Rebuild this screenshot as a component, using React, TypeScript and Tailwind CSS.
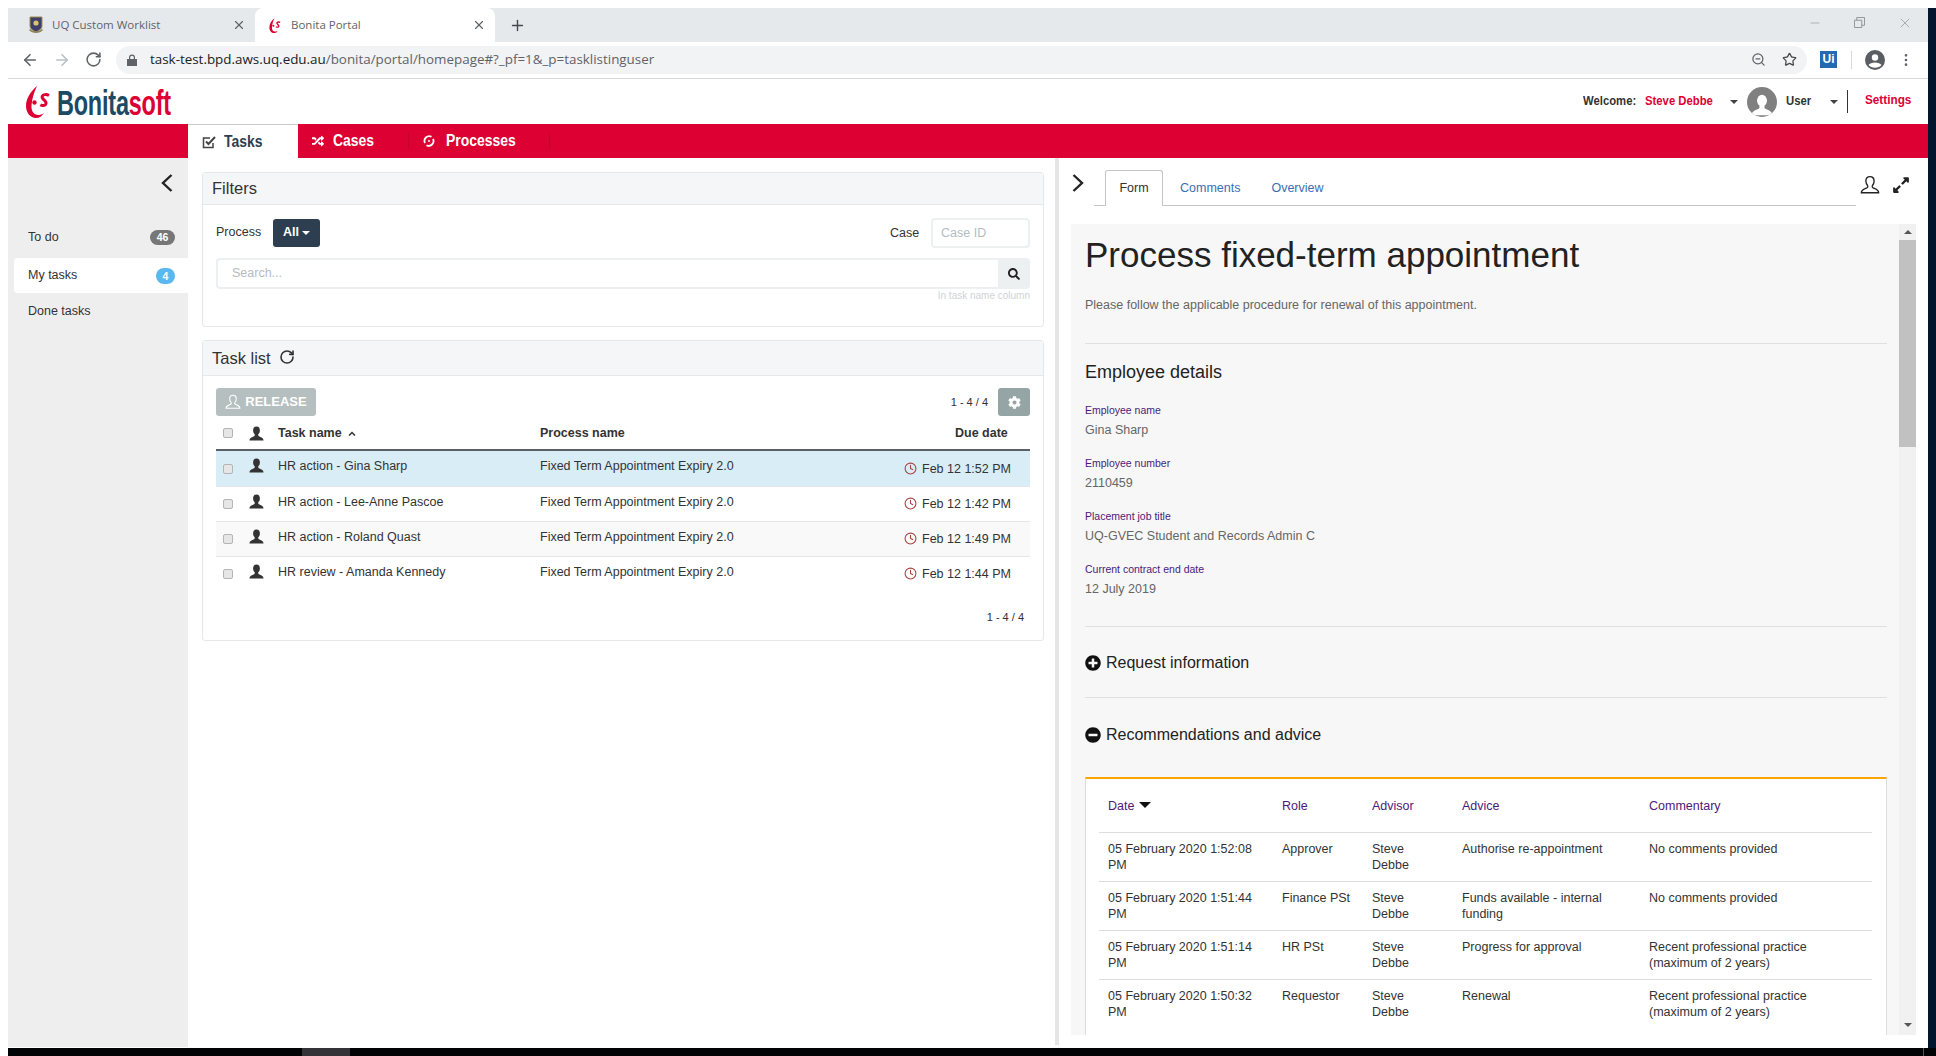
import React from "react";
import { FaCog, FaExpandAlt, FaMinusCircle, FaPlusCircle, FaRandom, FaSearch } from "react-icons/fa";
import { ArrowLeft, ArrowRight, Clock, Minus, MoreVertical, Plus, RotateCw, Star, X, ZoomOut } from "lucide-react";

const squeezed = "inline-block origin-left scale-x-[0.87] whitespace-nowrap";

function Bust({ className = "" }: { className?: string }) {
  return (
    <svg viewBox="0 0 16 16" className={className} fill="currentColor">
      <ellipse cx="8" cy="4.8" rx="3.6" ry="4.3" />
      <path d="M.5 15.5c0-3.2 3-3.6 5-4.7.8-.5.9-1.6.4-2.5h4.2c-.5.9-.4 2 .4 2.5 2 1.1 5 1.5 5 4.7z" />
    </svg>
  );
}

function BustOutline({ className = "" }: { className?: string }) {
  return (
    <svg viewBox="0 0 18 18" className={className} fill="none" stroke="currentColor" strokeWidth="1.2">
      <path d="M9 1.5c-2.4 0-3.7 1.9-3.7 4 0 1.8.8 3.2 1.5 4 .5.7.2 1.7-.6 2.1-1.9.9-5 1.6-5 4.4h15.6c0-2.8-3.1-3.5-5-4.4-.8-.4-1.1-1.4-.6-2.1.7-.8 1.500-2.200 1.500-4 0-2.100-1.300-4-3.700-4z" />
    </svg>
  );
}

function Swirl({ className = "" }: { className?: string }) {
  return (
    <svg viewBox="0 0 24 32" className={className} fill="none" stroke="#dd0033">
      <path d="M11 0C4 6 0 13 0 20c0 7 4.500 12 10 12 3.500 0 6-2 8-5-2 1.500-4 2-6 2-4 0-7-4-6.500-9.500C6 13 8 6 11 0z" fill="#dd0033" stroke="none" />
      <circle cx="8.500" cy="16.500" r="2.200" fill="#dd0033" stroke="none" />
      <path d="M23 9.500c-2.800-1.600-6-1-6.800.8-1.200 3 4.600 4.200 3.800 7.400-.5 2-3.600 2.400-5.600 1" strokeWidth="3" />
    </svg>
  );
}

function Crest() {
  return (
    <svg viewBox="0 0 14 18" className="w-[14px] h-[18px]">
      <path d="M1 1h12v9c0 3-3 4.500-6 6-3-1.500-6-3-6-6z" fill="#3f3f6b" stroke="#a08d4d" strokeWidth="1" />
      <circle cx="7" cy="7" r="2.600" fill="#d8c46c" />
      <path d="M0 14c3 4 11 4 14 0l-1-1c-3 3-9 3-12 0z" fill="#8b8455" />
    </svg>
  );
}

function Chevron({ dir }: { dir: "left" | "right" }) {
  return (
    <svg viewBox="0 0 12 18" className="w-[12px] h-[18px]" fill="none" stroke="#222" strokeWidth="2.400">
      <path d={dir === "left" ? "M10.500 1 2 9l8.500 8" : "M1.500 1 10 9l-8.500 8"} />
    </svg>
  );
}

function Caret({ className = "" }: { className?: string }) {
  return <span className={"inline-block w-0 h-0 border-x-[4px] border-x-transparent border-t-[4px] " + className} />;
}

function Checkbox() {
  return <span className="block w-[10px] h-[10px] rounded-[2px] bg-[#e6e6e6] border border-[#b5b5b5]" />;
}

const tasks = [
  { name: "HR action - Gina Sharp", due: "Feb 12 1:52 PM", bg: "bg-[#d9edf7]" },
  { name: "HR action - Lee-Anne Pascoe", due: "Feb 12 1:42 PM", bg: "bg-white" },
  { name: "HR action - Roland Quast", due: "Feb 12 1:49 PM", bg: "bg-[#f9f9f9]" },
  { name: "HR review - Amanda Kennedy", due: "Feb 12 1:44 PM", bg: "bg-white" },
];

const details = [
  ["Employee name", "Gina Sharp"],
  ["Employee number", "2110459"],
  ["Placement job title", "UQ-GVEC Student and Records Admin C"],
  ["Current contract end date", "12 July 2019"],
];

const advice = [
  ["05 February 2020 1:52:08 PM", "Approver", "Authorise re-appointment", "No comments provided"],
  ["05 February 2020 1:51:44 PM", "Finance PSt", "Funds available - internal funding", "No comments provided"],
  ["05 February 2020 1:51:14 PM", "HR PSt", "Progress for approval", "Recent professional practice (maximum of 2 years)"],
  ["05 February 2020 1:50:32 PM", "Requestor", "Renewal", "Recent professional practice (maximum of 2 years)"],
];

function BrowserChrome() {
  return (
    <>
      <div className="h-[34px] bg-[#e6e9ec] flex items-stretch font-['Open_Sans',sans-serif] text-[11.500px] text-[#5f6368] shrink-0">
        <div className="w-[247px] flex items-center pl-[21px] pr-[9px]">
          <Crest />
          <span className="ml-[9px] flex-1">UQ Custom Worklist</span>
          <X size={14} className="text-[#5f6368]" />
        </div>
        <div className="w-[240px] bg-white rounded-t-[8px] flex items-center pl-[14px] pr-[9px]">
          <Swirl className="w-[12px] h-[15px]" />
          <span className="ml-[10px] flex-1">Bonita Portal</span>
          <X size={14} className="text-[#5f6368]" />
        </div>
        <div className="w-[44px] flex items-center justify-center">
          <Plus size={17} className="text-[#45484c]" />
        </div>
        <div className="flex-1" />
        <div className="flex items-center gap-[32px] pr-[15px] -mt-[5px] text-[#8b8e91]">
          <Minus size={14} strokeWidth={1} />
          <svg viewBox="0 0 12 12" className="w-[11px] h-[11px]" fill="none" stroke="currentColor"><path d="M.5 3.500h8v8h-8zM3 3.500V.5h8.500V9H8.500" /></svg>
          <X size={16} strokeWidth={1} />
        </div>
      </div>
      <div className="h-[37px] bg-white border-b border-[#d9d9d9] flex items-center shrink-0 pb-[1px]">
        <div className="w-[108px] flex items-center pl-[13px] gap-[14px]">
          <ArrowLeft size={18} strokeWidth={2.200} className="text-[#5f6368]" />
          <ArrowRight size={18} strokeWidth={2.200} className="text-[#bcbfc3]" />
          <RotateCw size={17} strokeWidth={2.200} className="text-[#5f6368]" />
        </div>
        <div className="w-[1691px] h-[28px] rounded-full bg-[#f1f3f4] flex items-center pl-[11px] pr-[10px] font-['Open_Sans',sans-serif] text-[13.400px] text-[#5f6368]">
          <svg viewBox="0 0 10 12" className="w-[10px] h-[12px] mr-[13px] text-[#5f6368]" fill="currentColor"><path d="M0 5h10v7H0zM2 5V3.500a3 3 0 0 1 6 0V5H6.800V3.500a1.800 1.800 0 0 0-3.600 0V5z" /></svg>
          <span className="text-[#202124]">task-test.bpd.aws.uq.edu.au</span>
          <span>/bonita/portal/homepage#?_pf=1&amp;_p=tasklistinguser</span>
          <div className="flex-1" />
          <ZoomOut size={15} className="mr-[16px] text-[#5f6368]" />
          <Star size={15} className="text-[#45484c]" />
        </div>
        <div className="flex items-center ml-[13px]">
          <span className="w-[17px] h-[17px] bg-[#2569b1] text-white text-[12px] font-bold leading-[17px] text-center font-['Liberation_Sans',sans-serif]">Ui</span>
          <span className="w-px h-[18px] bg-[#d9d9d9] ml-[14px]" />
          <svg viewBox="0 0 20 20" className="w-[20px] h-[20px] ml-[13px]"><circle cx="10" cy="10" r="10" fill="#5a5d61" /><circle cx="10" cy="7.500" r="3.200" fill="#fff" /><path d="M3.500 15c2-3.500 11-3.500 13 0-3 3.600-10 3.600-13 0z" fill="#fff" /></svg>
          <MoreVertical size={16} className="ml-[13px] text-[#5f6368]" />
        </div>
      </div>
    </>
  );
}

function PortalHeader() {
  return (
    <>
      <div className="h-[45px] bg-white flex items-center shrink-0">
        <div className="flex items-end ml-[18px] h-[36px] w-[170px]">
          <Swirl className="w-[24px] h-[32px] mb-[2px] shrink-0" />
          <span className="inline-block origin-left scale-x-[0.67] whitespace-nowrap font-bold text-[35px] leading-[34px] text-[#1c4a64] ml-[7px] tracking-[-0.3px]">
            Bonita<span className="text-[#dd0033]">soft</span>
          </span>
        </div>
        <div className="flex-1" />
        <div className="flex items-center text-[13px] text-[#333] h-full">
          <span className="w-[62px] -mt-[2px]"><span className={squeezed + " font-bold"}>Welcome:</span></span>
          <span className="w-[85px] -mt-[2px]"><span className={squeezed + " font-bold text-[#dd0033]"}>Steve Debbe</span></span>
          <Caret className="border-t-[#444] mr-[9px]" />
          <span className="w-[30px] h-[30px] rounded-full bg-[#808080] overflow-hidden flex items-end justify-center">
            <Bust className="w-[22px] h-[24px] text-white" />
          </span>
          <span className="ml-[9px] w-[44px] -mt-[2px]"><span className={squeezed + " font-bold"}>User</span></span>
          <Caret className="border-t-[#444]" />
          <span className="w-px h-[23px] bg-[#333] ml-[9px]" />
          <span className="ml-[17px] mr-[17px] w-[46px] text-[13.500px] -mt-[2px]"><span className={squeezed + " font-bold text-[#dd0033]"}>Settings</span></span>
        </div>
      </div>
      <div className="h-[34px] bg-[#dd0033] flex items-stretch shrink-0 font-bold text-[16px]">
        <div className="w-[180px]" />
        <div className="w-[110px] bg-white text-[#2c3e50] flex items-center pl-[14px] border-t border-[#ccc]">
          <svg viewBox="0 0 14 14" className="w-[14px] h-[14px]" fill="none" stroke="#444" strokeWidth="1.500"><path d="M11 8v4.500H1.500V3H8" /><path d="M4 6.500l2.500 2.500L13 2" strokeWidth="2" /></svg>
          <span className={squeezed + " ml-[8px]"}>Tasks</span>
        </div>
        <div className="w-[111px] text-white flex items-center pl-[14px] relative">
          <FaRandom size={12} />
          <span className={squeezed + " ml-[9px]"}>Cases</span>
          <span className="absolute right-0 top-[9px] bottom-[9px] w-px bg-[#c4002d]" />
        </div>
        <div className="w-[141px] text-white flex items-center pl-[14px] relative">
          <svg viewBox="0 0 12 12" className="w-[12px] h-[12px]" fill="none" stroke="#fff" strokeWidth="1.800"><path d="M8.500 1.800A4.700 4.700 0 0 0 2 8M3.500 10.200A4.700 4.700 0 0 0 10 4" /><circle cx="6" cy="6" r="1" fill="#fff" stroke="none" /></svg>
          <span className={squeezed + " ml-[11px]"}>Processes</span>
          <span className="absolute right-0 top-[9px] bottom-[9px] w-px bg-[#c4002d]" />
        </div>
      </div>
    </>
  );
}

function Sidebar() {
  return (
    <aside className="w-[180px] bg-[#eeeeee] shrink-0 pt-[16px] text-[12.500px] text-[#333] pl-[6px]">
      <div className="flex justify-end pr-[15px] h-[18px]">
        <Chevron dir="left" />
      </div>
      <div className="mt-[27px] h-[36px] flex items-center pl-[14px] pr-[13px]">
        <span className="flex-1">To do</span>
        <span className="w-[25px] h-[15px] rounded-full bg-[#777] text-white font-bold text-[10.500px] leading-[15px] text-center">46</span>
      </div>
      <div className="mt-[3px] h-[35px] bg-white rounded-l-[4px] flex items-center pl-[14px] pr-[13px]">
        <span className="flex-1">My tasks</span>
        <span className="w-[19px] h-[16px] rounded-full bg-[#5bb8ee] text-white font-bold text-[10.500px] leading-[16px] text-center">4</span>
      </div>
      <div className="h-[36px] flex items-center pl-[14px]">Done tasks</div>
    </aside>
  );
}

function Filters() {
  return (
    <section className="h-[155px] border border-[#e5e7e9] rounded-[3px] shrink-0">
      <div className="h-[32px] bg-[#f5f6f7] border-b border-[#e5e7e9] px-[9px] text-[16.500px] leading-[31px] text-[#333]">Filters</div>
      <div className="px-[13px] pt-[13px]">
        <div className="flex items-center h-[30px]">
          <span className="text-[12.500px] text-[#333] w-[57px] -mt-[2px]">Process</span>
          <span className="w-[47px] h-[28px] bg-[#2c3e50] rounded-[3px] text-white font-bold text-[12.500px] flex items-center justify-center gap-[3px] -mt-[1px]">
            All <Caret className="border-t-white" />
          </span>
          <div className="flex-1" />
          <span className="text-[12.500px] text-[#333] w-[41px]">Case</span>
          <span className="w-[99px] h-[30px] border-2 border-[#ecf0f1] rounded-[4px] bg-white text-[12.500px] text-[#b4bcc2] pl-[8px] leading-[26px]">Case ID</span>
        </div>
        <div className="flex mt-[10px] h-[31px]">
          <span className="flex-1 border-2 border-[#ecf0f1] border-r-0 rounded-l-[4px] text-[12.500px] text-[#b4bcc2] pl-[14px] leading-[27px]">Search...</span>
          <span className="w-[32px] bg-[#ecf0f1] rounded-r-[4px] flex items-center justify-center text-[#222]">
            <FaSearch size={12} />
          </span>
        </div>
        <div className="text-right text-[10px] leading-[14px] text-[#cfd3d6]">In task name column</div>
      </div>
    </section>
  );
}

function TaskList() {
  return (
    <section className="h-[301px] mt-[13px] border border-[#e5e7e9] rounded-[3px] shrink-0">
      <div className="h-[35px] bg-[#f5f6f7] border-b border-[#e5e7e9] px-[9px] flex items-center text-[16.500px] text-[#333]">
        Task list
        <RotateCw size={16} strokeWidth={2.400} className="ml-[8px] -mt-[3px] text-[#333]" />
      </div>
      <div className="px-[13px] pt-[12px]">
        <div className="flex items-center h-[28px]">
          <span className="w-[100px] h-[28px] rounded-[3px] bg-[#b6bfbf] text-white font-bold text-[13px] flex items-center justify-center gap-[4px]">
            <BustOutline className="w-[16px] h-[16px]" /> RELEASE
          </span>
          <div className="flex-1" />
          <span className="text-[11px] text-[#333] mr-[10px]">1 - 4 / 4</span>
          <span className="w-[32px] h-[28px] rounded-[3px] bg-[#95a5a6] text-white flex items-center justify-center">
            <FaCog size={13} />
          </span>
        </div>
        <div className="flex items-center h-[35px] pt-[1px] border-b-2 border-[#5a6066] text-[12.500px] text-[#333] font-bold">
          <div className="w-[62px] flex items-center pl-[7px]">
            <Checkbox />
            <Bust className="w-[15px] h-[15px] ml-[16px] text-[#333]" />
          </div>
          <div className="w-[262px] flex items-center gap-[6px]">
            <span>Task name</span>
            <svg viewBox="0 0 8 5" className="w-[8px] h-[5px]" fill="none" stroke="#333" strokeWidth="1.500"><path d="M1 4.500l3-3 3 3" /></svg>
          </div>
          <div className="flex-1 pt-[1px]">Process name</div>
          <div className="w-[75px]">Due date</div>
        </div>
        {tasks.map((t, i) => (
          <div key={t.name} className={"flex items-center h-[35px] text-[12.500px] text-[#333] " + t.bg + (i > 0 ? " border-t border-[#e6e6e6]" : "")}>
            <div className="w-[62px] flex items-center pl-[7px]">
              <Checkbox />
              <Bust className="w-[15px] h-[15px] ml-[16px] -mt-[6px] text-[#333]" />
            </div>
            <div className="w-[262px] -mt-[4px]">{t.name}</div>
            <div className="flex-1 -mt-[4px] whitespace-nowrap">Fixed Term Appointment Expiry 2.0</div>
            <div className="w-[126px] flex items-center pt-[1px]">
              <Clock size={13} strokeWidth={2} className="text-[#a94442] -mt-[2px]" />
              <span className="ml-[5px]">{t.due}</span>
            </div>
          </div>
        ))}
        <div className="text-right text-[11px] text-[#333] pr-[6px] pt-[18px]">1 - 4 / 4</div>
      </div>
    </section>
  );
}

function TabsBar() {
  return (
    <div className="h-[48px] flex items-end shrink-0 relative">
      <div className="w-[35px] self-start pt-[16px] pl-[13px] h-full">
        <Chevron dir="right" />
      </div>
      <div className="w-[762px] h-[35px] border-b border-[#c4c4c4] flex items-end text-[12.500px] pl-[11px]">
        <div className="w-[58px] h-[36px] border border-b-0 border-[#c4c4c4] rounded-t-[3px] bg-white text-[#333] text-center leading-[35px] -mb-px">Form</div>
        <span className="ml-[17px] text-[#3b6eb5] h-[32px] leading-[31px]">Comments</span>
        <span className="ml-[31px] text-[#3b6eb5] h-[32px] leading-[31px]">Overview</span>
      </div>
      <div className="flex items-center ml-[4px] mb-[11px] gap-[12px] text-[#222]">
        <BustOutline className="w-[20px] h-[20px]" />
        <FaExpandAlt size={18} />
      </div>
    </div>
  );
}

function AdviceTable() {
  return (
    <div className="border-t-2 border-t-[#ffa500] border-x border-x-[#dddddd] bg-white pl-[13px] pr-[14px] h-[400px] text-[12.500px] text-[#333]">
      <div className="h-[54px] border-b border-[#dddddd] flex items-start pt-[18px] pl-[9px] text-[#4b1a7a]">
        <div className="w-[174px] flex items-center gap-[5px]">Date <Caret className="border-x-[6px] border-t-[6px] border-t-[#111] -mt-[3px]" /></div>
        <div className="w-[90px]">Role</div>
        <div className="w-[90px]">Advisor</div>
        <div className="w-[187px]">Advice</div>
        <div>Commentary</div>
      </div>
      {advice.map((r, i) => (
        <div key={r[0]} className={"h-[49px] flex items-start pt-[8px] pl-[9px] leading-[16px]" + (i < 3 ? " border-b border-[#dddddd]" : "")}>
          <div className="w-[174px] pr-[20px]">{r[0]}</div>
          <div className="w-[90px]">{r[1]}</div>
          <div className="w-[90px] pr-[30px]">Steve Debbe</div>
          <div className="w-[187px] pr-[20px]">{r[2]}</div>
          <div className="w-[190px]">{r[3]}</div>
        </div>
      ))}
    </div>
  );
}

function FormPanel() {
  return (
    <div className="flex h-[811px] ml-[12px] shrink-0">
      <div className="w-[828px] bg-[#f7f7f7] pl-[14px] pr-[12px] overflow-hidden">
        <h1 className="text-[35px] leading-[40px] text-[#222] pt-[11px]">Process fixed-term appointment</h1>
        <p className="text-[12.500px] leading-[16px] text-[#666] mt-[22px]">Please follow the applicable procedure for renewal of this appointment.</p>
        <div className="h-px bg-[#e0e0e0] mt-[30px]" />
        <h2 className="text-[18px] leading-[22px] text-[#222] mt-[17px]">Employee details</h2>
        <div className="mt-[20px]">
          {details.map(([k, v]) => (
            <div key={k} className="h-[53px]">
              <div className="text-[10.500px] leading-[14px] text-[#4b1a7a]">{k}</div>
              <div className="text-[12.500px] leading-[16px] text-[#666] mt-[5px]">{v}</div>
            </div>
          ))}
        </div>
        <div className="h-px bg-[#e0e0e0] mt-[11px]" />
        <div className="flex items-center mt-[26px] h-[20px] text-[16px] text-[#222]">
          <FaPlusCircle size={16} className="mr-[5px] text-[#111]" />Request information
        </div>
        <div className="h-px bg-[#e0e0e0] mt-[24px]" />
        <div className="flex items-center mt-[27px] h-[20px] text-[16px] text-[#222]">
          <FaMinusCircle size={16} className="mr-[5px] text-[#111]" />Recommendations and advice
        </div>
        <div className="mt-[32px]">
          <AdviceTable />
        </div>
      </div>
      <div className="w-[17px] bg-[#f1f1f1] flex flex-col items-center">
        <span className="block w-0 h-0 border-x-[4px] border-x-transparent border-b-[4px] border-b-[#555] mt-[6px]" />
        <div className="w-full h-[207px] bg-[#c1c1c1] mt-[6px]" />
        <div className="flex-1" />
        <Caret className="border-t-[#555] mb-[8px]" />
      </div>
    </div>
  );
}

export default function App() {
  return (
    <div className="w-[1936px] h-[1056px] overflow-hidden bg-white flex flex-col font-['Liberation_Sans',Arial,sans-serif]">
      <div className="h-[8px] shrink-0" />
      <div className="h-[1040px] flex shrink-0">
        <div className="w-[8px] shrink-0" />
        <div className="w-[1920px] flex flex-col shrink-0">
          <BrowserChrome />
          <PortalHeader />
          <div className="h-[889px] flex shrink-0">
            <Sidebar />
            <main className="w-[867px] shrink-0 pl-[14px] pr-[11px] pt-[14px] flex flex-col">
              <Filters />
              <TaskList />
            </main>
            <div className="w-[4px] h-[887px] bg-[#e5e5e5] shrink-0" />
            <div className="flex-1 flex flex-col min-w-0 overflow-hidden">
              <TabsBar />
              <div className="h-[18px] shrink-0" />
              <FormPanel />
            </div>
          </div>
          <div className="h-px bg-white shrink-0" />
        </div>
        <div className="w-[8px] bg-[#03162e] shrink-0" />
      </div>
      <div className="h-[8px] ml-[8px] bg-[#010305] flex shrink-0 overflow-hidden">
        <div className="w-[294px]" />
        <div className="w-[48px] bg-[#333338]" />
        <div className="flex-1 flex justify-end">
          <span className="text-[11px] leading-[14px] text-white font-['Open_Sans',sans-serif] pt-[5px] mr-[58px]">3:04 PM</span>
          <span className="w-px bg-[#555] mr-[12px]" />
        </div>
      </div>
    </div>
  );
}
